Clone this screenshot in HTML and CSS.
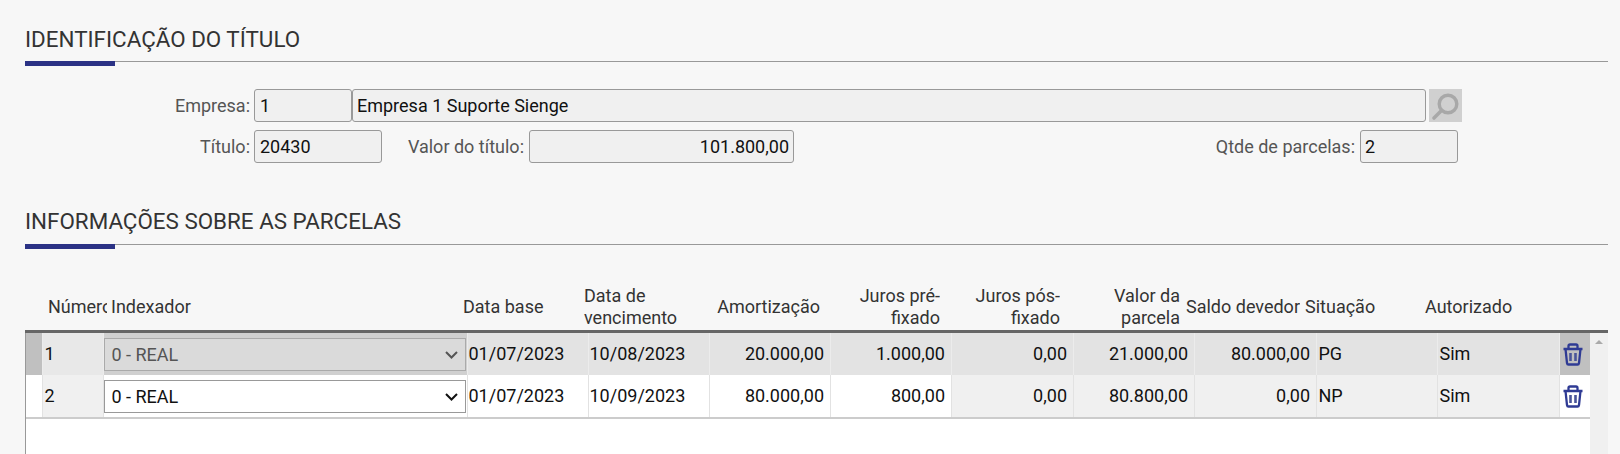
FILE: index.html
```html
<!DOCTYPE html>
<html lang="pt-BR">
  <head>
    <meta charset="UTF-8" />
    <title>Parcelas do título</title>
    <link rel="stylesheet" href="styles.css">
  </head>
  <body>
    <h2 class="section-title first">IDENTIFICAÇÃO DO TÍTULO</h2>
    <div class="form">
      <div class="form-row">
        <label class="label label-main">Empresa:</label>
        <input class="field field-code" value="1" readonly />
        <input class="field field-name" value="Empresa 1 Suporte Sienge" readonly />
        <button class="search-button" type="button">
          <svg width="33" height="33" viewBox="0 0 33 33">
            <circle cx="19" cy="15" r="8.8" fill="none" stroke="#a8a8a8" stroke-width="3.4" />
            <path d="M12.5 21.5 L5 29" stroke="#a8a8a8" stroke-width="3.6" stroke-linecap="round" />
          </svg>
        </button>
      </div>
      <div class="form-row">
        <label class="label label-main">Título:</label>
        <input class="field field-title" value="20430" readonly />
        <label class="label label-value">Valor do título:</label>
        <input class="field field-value" value="101.800,00" readonly />
        <label class="label label-count">Qtde de parcelas:</label>
        <input class="field field-count" value="2" readonly />
      </div>
    </div>

    <h2 class="section-title">INFORMAÇÕES SOBRE AS PARCELAS</h2>
    <table class="grid-head">
      <colgroup>
        <col class="h-pad" /><col class="h-num" /><col class="h-idx" />
        <col class="h-col" /><col class="h-col" /><col class="h-col" /><col class="h-col" />
        <col class="h-col" /><col class="h-col" /><col class="h-col" /><col class="h-sit" /><col class="h-col" />
      </colgroup>
      <tr>
        <th></th>
        <th>Número</th>
        <th>Indexador</th>
        <th class="head-base">Data base</th>
        <th>Data de vencimento</th>
        <th class="right">Amortização</th>
        <th class="right">Juros pré-fixado</th>
        <th class="right">Juros pós-fixado</th>
        <th class="right">Valor da parcela</th>
        <th class="right">Saldo devedor</th>
        <th class="head-sit">Situação</th>
        <th>Autorizado</th>
      </tr>
    </table>

    <div class="grid-wrap">
      <div class="grid-body">
        <table class="grid">
          <colgroup>
            <col class="c-sel" /><col class="c-num" /><col class="c-idx" />
            <col class="c-col" /><col class="c-col" /><col class="c-col" /><col class="c-col" />
            <col class="c-col2" /><col class="c-col" /><col class="c-col2" /><col class="c-col" /><col class="c-col2" />
            <col class="c-del" />
          </colgroup>
          <tr class="selected">
            <td class="sel"></td>
            <td class="num">1</td>
            <td class="idx"><select class="indexer" disabled><option>0 - REAL</option></select></td>
            <td>01/07/2023</td>
            <td>10/08/2023</td>
            <td class="right">20.000,00</td>
            <td class="right">1.000,00</td>
            <td class="right">0,00</td>
            <td class="right">21.000,00</td>
            <td class="right">80.000,00</td>
            <td class="sit">PG</td>
            <td class="sit">Sim</td>
            <td class="del">
              <svg class="trash" width="20" height="23" viewBox="0 0 20 23">
                <path class="trash-body" d="M0.5 6 H19.5 M5.5 6 V3 Q5.5 1.5 7 1.5 H13 Q14.5 1.5 14.5 3 V6 M2.5 6 L4 20 Q4.2 21.5 5.5 21.5 H14.5 Q15.8 21.5 16 20 L17.5 6" />
                <path class="trash-bars" d="M7.5 10 V18 M12.5 10 V18" />
              </svg>
            </td>
          </tr>
          <tr class="last">
            <td class="sel"></td>
            <td class="num locked">2</td>
            <td class="idx"><select class="indexer"><option>0 - REAL</option></select></td>
            <td>01/07/2023</td>
            <td>10/09/2023</td>
            <td class="right">80.000,00</td>
            <td class="right">800,00</td>
            <td class="right locked">0,00</td>
            <td class="right locked">80.800,00</td>
            <td class="right locked">0,00</td>
            <td class="sit locked">NP</td>
            <td class="sit locked">Sim</td>
            <td class="del">
              <svg class="trash" width="20" height="23" viewBox="0 0 20 23">
                <path class="trash-body" d="M0.5 6 H19.5 M5.5 6 V3 Q5.5 1.5 7 1.5 H13 Q14.5 1.5 14.5 3 V6 M2.5 6 L4 20 Q4.2 21.5 5.5 21.5 H14.5 Q15.8 21.5 16 20 L17.5 6" />
                <path class="trash-bars" d="M7.5 10 V18 M12.5 10 V18" />
              </svg>
            </td>
          </tr>
        </table>
      </div>
      <div class="scrollbar"><div class="scroll-up"></div></div>
    </div>
  </body>
</html>
```

FILE: styles.css
```css
html,
body {
  height: 100%;
}
body {
  margin: 0;
  background: #f7f7f7;
  font-family: Roboto, "Liberation Sans", sans-serif;
  font-size: 18px;
  color: #222;
  overflow: hidden;
  display: flex;
  flex-direction: column;
}

.section-title {
  position: relative;
  margin: 37px 12px 0 25px;
  padding-bottom: 10px;
  border-bottom: 1px solid #999;
  font-size: 22.4px;
  font-weight: 400;
  line-height: 26px;
  color: #333;
}
.section-title.first {
  margin-top: 26px;
  padding-bottom: 9px;
}
.section-title::after {
  content: "";
  position: absolute;
  left: 0;
  bottom: -5px;
  width: 90px;
  height: 5px;
  background: #2b3285;
}

.form {
  margin-top: 27px;
}
.form-row {
  display: flex;
  align-items: center;
  height: 33px;
  margin-bottom: 8px;
}
.label {
  color: #555;
  text-align: right;
  padding-right: 4px;
}
.label-main {
  width: 250px;
}
.label-value {
  margin-left: 18px;
  width: 124px;
  padding-right: 5px;
}
.label-count {
  margin-left: auto;
  padding-right: 5px;
}
.field {
  box-sizing: border-box;
  height: 33px;
  padding: 0 4px;
  border: 1px solid #999;
  border-radius: 3px;
  background: #f0f0f0;
  font: inherit;
  color: #111;
  outline: none;
}
.field-code {
  width: 98px;
  padding-left: 5px;
}
.field-name {
  width: 1074px;
}
.field-title {
  width: 128px;
  padding-left: 5px;
}
.field-value {
  width: 265px;
  text-align: right;
}
.field-count {
  width: 98px;
  margin-right: 162px;
}
.search-button {
  width: 33px;
  height: 33px;
  margin-left: 3px;
  padding: 0;
  border: none;
  background: #d0d0d0;
}
.search-button svg {
  display: block;
}

.grid-head {
  table-layout: fixed;
  border-collapse: collapse;
  width: 1516px;
  margin: 25px 0 0 25px;
}
.grid-head th {
  height: 60px;
  padding: 14px 0 0 4px;
  box-sizing: border-box;
  font-weight: 400;
  line-height: 22px;
  text-align: left;
  color: #333;
  overflow: hidden;
  white-space: normal;
}
.grid-head th.right {
  text-align: right;
  padding-left: 0;
}
.grid-head th.head-base {
  padding-left: 3px;
}
.grid-head th.head-sit {
  padding-left: 5px;
}
.h-pad {
  width: 19px;
}
.h-num {
  width: 63px;
}
.h-idx {
  width: 353px;
}
.h-col {
  width: 120px;
}
.h-sit {
  width: 121px;
}

.grid-wrap {
  flex: 1;
  display: flex;
  margin: 0 12px 0 25px;
  border-top: 3px solid #666;
}
.grid-body {
  width: 1565px;
  box-sizing: border-box;
  border-left: 1px solid #999;
  background: #fff;
}
.grid {
  table-layout: fixed;
  border-collapse: collapse;
  width: 1564px;
  border-bottom: 2px solid #ccc;
}
.grid td {
  padding: 0 1px 2px 1px;
  box-sizing: border-box;
  height: 42px;
  border-left: 1px solid #e2e2e2;
  white-space: nowrap;
  overflow: hidden;
  color: #111;
}
.grid tr.last td {
  height: 43px;
}
.grid td.right {
  text-align: right;
  padding-right: 5.5px;
}
.grid td.num,
.grid td.sit {
  padding-left: 2px;
}
.grid td.idx {
  padding: 1px 1px 0 0;
}
.grid td.del {
  padding: 0;
}
.grid td.sel {
  border-left: none;
}
.grid .locked {
  background: #f0f0f0;
}
.grid tr.selected td {
  background: #e3e3e3;
  border-left-color: #ececec;
}
.grid tr.selected td.idx {
  background: #d0d0d0;
}
.grid tr.selected td.num {
  background: #e8e8e8;
}
.grid tr.selected td.sel,
.grid tr.selected td.del {
  background: #c0c0c0;
}
.c-sel {
  width: 16px;
}
.c-num {
  width: 61px;
}
.c-idx {
  width: 364px;
}
.c-col {
  width: 121px;
}
.c-col2 {
  width: 122px;
}
.c-del {
  width: 31px;
}
.trash {
  display: block;
  margin-left: 3px;
}
.trash-body {
  fill: none;
  stroke: #2f3b94;
  stroke-width: 2.3;
}
.trash-bars {
  fill: none;
  stroke: #4a5599;
  stroke-width: 2.6;
}

.indexer {
  appearance: none;
  box-sizing: border-box;
  display: block;
  width: 100%;
  height: 33px;
  padding: 0 0 0 7px;
  border: 1px solid #999;
  border-radius: 0;
  background: #fff url("data:image/svg+xml,%3Csvg xmlns='http://www.w3.org/2000/svg' width='13' height='8'%3E%3Cpath d='M1 1 L6.5 6.5 L12 1' fill='none' stroke='%23111' stroke-width='2'/%3E%3C/svg%3E") no-repeat right 7px center;
  font: inherit;
  color: #111;
}
.indexer:disabled {
  background: #dadada url("data:image/svg+xml,%3Csvg xmlns='http://www.w3.org/2000/svg' width='13' height='8'%3E%3Cpath d='M1 1 L6.5 6.5 L12 1' fill='none' stroke='%23555' stroke-width='2'/%3E%3C/svg%3E") no-repeat right 7px center;
  border-color: #aaa;
  color: #555;
  opacity: 1;
}

.scrollbar {
  width: 18px;
  background: #f0f0f0;
  display: flex;
  justify-content: center;
  padding-top: 7px;
}
.scroll-up {
  width: 0;
  height: 0;
  border-left: 4px solid transparent;
  border-right: 4px solid transparent;
  border-bottom: 4px solid #aaa;
}
```
